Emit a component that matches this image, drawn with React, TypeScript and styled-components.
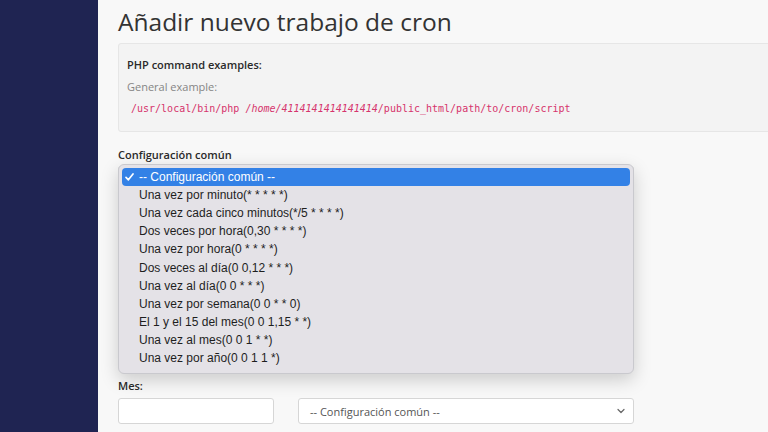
import { FunctionComponent } from 'react';
import styled, { createGlobalStyle } from 'styled-components';

const options = [
    'Una vez por minuto(* * * * *)',
    'Una vez cada cinco minutos(*/5 * * * *)',
    'Dos veces por hora(0,30 * * * *)',
    'Una vez por hora(0 * * * *)',
    'Dos veces al día(0 0,12 * * *)',
    'Una vez al día(0 0 * * *)',
    'Una vez por semana(0 0 * * 0)',
    'El 1 y el 15 del mes(0 0 1,15 * *)',
    'Una vez al mes(0 0 1 * *)',
    'Una vez por año(0 0 1 1 *)',
];

const fields = ['Minuto:', 'Hora:', 'Día:', 'Mes:'];

const Chevron = () => (
    <svg width="8" height="6" viewBox="0 0 8 6" fill="none">
        <path d="M1 1.5 L4 4.5 L7 1.5" stroke="#666" strokeWidth="1.2" strokeLinecap="round" strokeLinejoin="round" />
    </svg>
);

const CheckMark = () => (
    <svg width="9" height="8" viewBox="0 0 9 8" fill="none">
        <path d="M1 4.3 L3.4 6.8 L8 1" stroke="#fff" strokeWidth="1.7" strokeLinecap="round" strokeLinejoin="round" />
    </svg>
);

const App: FunctionComponent = () => (
    <>
        <GlobalStyle />
        <Page>
            <Sidebar />
            <Main>
                <Title>Añadir nuevo trabajo de cron</Title>
                <ExampleBox>
                    <BoxHeading>PHP command examples:</BoxHeading>
                    <BoxHint>General example:</BoxHint>
                    <Code>
                        /usr/local/bin/php <em>/home/4114141414141414</em>/public_html/path/to/cron/script
                    </Code>
                </ExampleBox>

                <Label>Configuración común</Label>
                <SelectWrap>
                    <Select>
                        <span>-- Configuración común --</span>
                        <Chevron />
                    </Select>
                    <Popup>
                        <Option selected>
                            <Check>
                                <CheckMark />
                            </Check>
                            <span>-- Configuración común --</span>
                        </Option>
                        {options.map((o) => (
                            <Option key={o}>{o}</Option>
                        ))}
                    </Popup>
                </SelectWrap>

                {fields.map((f) => (
                    <FieldRow key={f}>
                        <Label>{f}</Label>
                        <Inputs>
                            <TextInput />
                            <Select wide>
                                <span>-- Configuración común --</span>
                                <Chevron />
                            </Select>
                        </Inputs>
                    </FieldRow>
                ))}
            </Main>
        </Page>
    </>
);

export default App;

const GlobalStyle = createGlobalStyle`
    html, body {
        margin: 0;
        padding: 0;
        overflow: hidden;
        background: #f8f8f8;
    }
    body {
        font-family: "Open Sans", "Liberation Sans", sans-serif;
        color: #333;
    }
`;

const Page = styled.div`
    display: flex;
    width: 768px;
    height: 432px;
    overflow: hidden;
`;

const Sidebar = styled.div`
    width: 98px;
    flex-shrink: 0;
    background: #1f2452;
`;

const Main = styled.div`
    flex: 1;
    padding: 0 0 0 20px;
    display: flex;
    flex-direction: column;
    min-width: 0;
`;

const Title = styled.h1`
    margin: 5px 0 5px;
    font-size: 24.5px;
    font-weight: 400;
    line-height: 33px;
    color: #333;
    white-space: nowrap;
`;

const ExampleBox = styled.div`
    width: 700px;
    box-sizing: border-box;
    background: #f3f3f3;
    border: 1px solid #e6e6e6;
    border-radius: 3px;
    padding: 12px 8px 13px;
    display: flex;
    flex-direction: column;
`;

const BoxHeading = styled.div`
    font-size: 11px;
    font-weight: 600;
    line-height: 18px;
    color: #2a2a2a;
`;

const BoxHint = styled.div`
    margin-top: 4px;
    font-size: 11px;
    line-height: 18px;
    color: #858585;
`;

const Code = styled.code`
    margin-top: 4px;
    padding-left: 4px;
    font-family: "DejaVu Sans Mono", "Liberation Mono", monospace;
    font-size: 10px;
    line-height: 18px;
    color: #d6336c;
    white-space: nowrap;

    em {
        font-style: italic;
    }
`;

const Label = styled.div`
    margin-top: 14px;
    font-size: 11px;
    font-weight: 600;
    line-height: 18px;
    color: #2a2a2a;
`;

const SelectWrap = styled.div`
    position: relative;
    width: 516px;
    margin-top: 2px;
`;

const Select = styled.div<{ wide?: boolean }>`
    box-sizing: border-box;
    width: ${(p) => (p.wide ? '336px' : '516px')};
    height: 26px;
    padding: 0 8px 0 11px;
    background: #fff;
    border: 1px solid #d6d6d6;
    border-radius: 3px;
    display: flex;
    align-items: center;
    justify-content: space-between;
    font-size: 11px;
    color: #555;
`;

const Popup = styled.div`
    position: absolute;
    top: -2px;
    left: 0;
    width: 516px;
    box-sizing: border-box;
    padding: 3px 3px 6px;
    background: #e4e2e7;
    border: 1px solid #c9c9ce;
    border-radius: 6px;
    box-shadow: 0 6px 18px rgba(0, 0, 0, 0.18);
    font-family: "Liberation Sans", Arial, sans-serif;
    font-size: 12px;
    z-index: 10;
`;

const Option = styled.div<{ selected?: boolean }>`
    height: 18.1px;
    display: flex;
    align-items: center;
    padding-left: 17px;
    border-radius: 4px;
    color: ${(p) => (p.selected ? '#fff' : '#1e1e1e')};
    background: ${(p) => (p.selected ? '#3381e6' : 'transparent')};
    white-space: nowrap;
    position: relative;
`;

const Check = styled.span`
    position: absolute;
    left: 3px;
    top: 5px;
    display: flex;
`;

const FieldRow = styled.div`
    display: flex;
    flex-direction: column;
    margin-top: -3px;
`;

const Inputs = styled.div`
    display: flex;
    gap: 24px;
    margin-top: 3px;
`;

const TextInput = styled.div`
    width: 156px;
    height: 26px;
    box-sizing: border-box;
    background: #fff;
    border: 1px solid #d6d6d6;
    border-radius: 3px;
`;
